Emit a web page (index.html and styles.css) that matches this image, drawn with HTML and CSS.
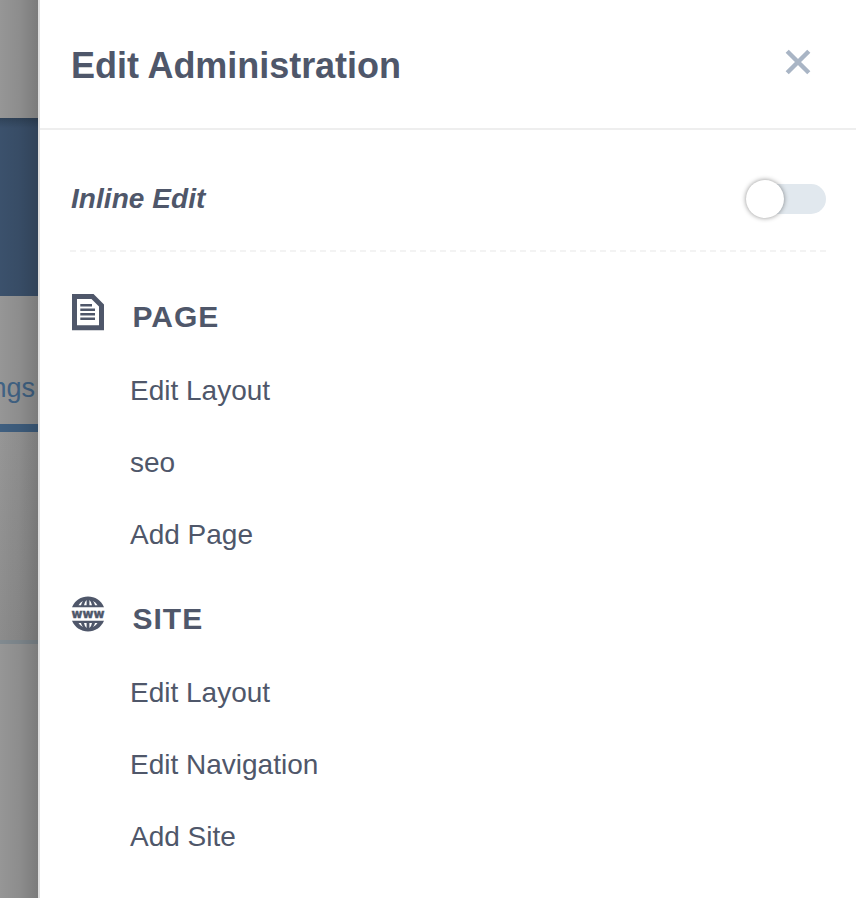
FILE: index.html
```html
<!DOCTYPE html>
<html lang="en">
<head>
<meta charset="utf-8">
<title>Edit Administration</title>
<link rel="stylesheet" href="styles.css">
</head>
<body>
<div class="app">
  <div class="backdrop">
    <div class="topbar"></div>
    <div class="banner"></div>
    <div class="tabs"><span class="tab">ngs</span></div>
    <div class="content"></div>
    <div class="rest"></div>
  </div>
  <aside class="drawer">
    <header class="drawer-header">
      <h1>Edit Administration</h1>
      <button class="close" aria-label="Close">
        <svg width="26" height="26" viewBox="0 0 26 26"><path d="M2.200 2.200 23.800 23.800M23.800 2.200 2.200 23.800" fill="none" stroke="#a9b5c5" stroke-width="4.400"/></svg>
      </button>
    </header>
    <div class="drawer-body">
      <div class="inline-edit">
        <span class="label">Inline Edit</span>
        <span class="toggle"><span class="knob"></span></span>
      </div>
      <svg class="divider" width="758" height="2"><path d="M0 1H756" stroke="#f3f3f3" stroke-width="2" stroke-dasharray="6 4"/></svg>
      <section class="group">
        <h2>
          <svg width="34" height="38" viewBox="0 0 34 38"><path d="M3.500 3.500H21.500L30.500 12.500V34.800H3.500Z" fill="none" stroke="#4f576a" stroke-width="5"/><path d="M9.300 12.300H21M9.300 16.700H24M9.300 21.300H24M9.300 25.800H24" stroke="#4f576a" stroke-width="2.600"/></svg>
          <span>PAGE</span>
        </h2>
        <ul><li>Edit Layout</li><li>seo</li><li>Add Page</li></ul>
      </section>
      <section class="group">
        <h2>
          <svg width="34" height="38" viewBox="0 0 34 38">
            <g fill="#4f576a"><path d="M1 12.300C4 5.400 10 1.600 17 1.600S30 5.400 33 12.300Z"/><path d="M1 25.800C4 32.800 10 36.400 17 36.400S30 32.800 33 25.800Z"/></g>
            <g fill="#fff"><path d="M7.500 10.200Q9 7.500 12 6Q10.500 8 10 10.200ZM13 10.200Q13.600 6.800 15.600 5V10.200ZM18.400 10.200V5Q20.400 6.800 21 10.200ZM26.500 10.200Q25 7.500 22 6Q23.500 8 24 10.200Z"/><path d="M7.500 27.900Q9 30.600 12 32.100Q10.500 30.100 10 27.900ZM13 27.900Q13.600 31.200 15.600 33V27.900ZM18.400 27.900V33Q20.400 31.200 21 27.900ZM26.500 27.900Q25 30.600 22 32.100Q23.500 30.100 24 27.900Z"/></g>
            <text class="www" x="0.500" y="22.500" textLength="33" lengthAdjust="spacingAndGlyphs">www</text>
          </svg>
          <span>SITE</span>
        </h2>
        <ul><li>Edit Layout</li><li>Edit Navigation</li><li>Add Site</li></ul>
      </section>
    </div>
  </aside>
</div>
</body>
</html>
```
FILE: styles.css
```css
* { box-sizing: border-box; }
body { margin: 0; font-family: "Liberation Sans", Arial, sans-serif; color: #4f576a; background: #fff; }
.app { display: flex; height: 898px; overflow: hidden; }
.backdrop { position: relative; width: 38px; flex: none; display: flex; flex-direction: column; overflow: hidden; background: #969696; }
.backdrop::after { content: ""; position: absolute; inset: 0; background: linear-gradient(90deg, rgba(0,0,0,0), rgba(0,0,0,.06) 50%, rgba(0,0,0,.18)); }
.topbar { height: 118px; }
.banner { height: 178px; background: linear-gradient(#304359, #3b516c 10px); }
.tabs { height: 136px; border-bottom: 8px solid #3f5f80; display: flex; justify-content: flex-end; padding: 77px 3px 0 0; }
.tab { font-size: 27px; line-height: 30px; color: #416385; }
.content { height: 212px; border-bottom: 4px solid #818a90; background: linear-gradient(#969696, #8c8c8c); }
.rest { flex: 1; }
.drawer { flex: 1; border-left: 2px solid #dedede; background: #fff; }
.drawer-header { height: 130px; display: flex; justify-content: space-between; padding: 45px 45px 0 31px; border-bottom: 2px solid #eee; }
h1 { margin: 0; font-size: 36px; line-height: 42px; letter-spacing: -.04px; }
.close { width: 26px; height: 26px; margin: 4px 2px 0 0; padding: 0; border: 0; background: none; }
.close svg { display: block; }
.drawer-body { padding: 0 30px; }
.inline-edit { height: 120px; display: flex; justify-content: space-between; padding-top: 49px; }
.label { margin-left: 1px; font-size: 28px; line-height: 39px; font-weight: bold; font-style: italic; letter-spacing: .05px; }
.toggle { position: relative; width: 76px; height: 30px; margin: 5px 2px 0 0; border-radius: 15px; background: #e1e8ee; }
.knob { position: absolute; left: -4px; top: -4px; width: 38px; height: 38px; border-radius: 50%; background: #fff; box-shadow: 0 0 5px rgba(0,0,0,.45); }
.divider { display: block; }
.group { height: 302px; padding-top: 41px; }
h2 { height: 62px; margin: 0; display: flex; gap: 27.5px; font-size: 30px; line-height: 48px; letter-spacing: 1px; }
h2 svg { flex: none; margin-left: 1px; overflow: visible; }
ul { list-style: none; margin: 0; padding: 0 0 0 60px; }
li { height: 72px; font-size: 28px; line-height: 72px; }
.www { font: bold 12.5px "DejaVu Sans", sans-serif; letter-spacing: 0; fill: #4f576a; stroke: #4f576a; stroke-width: .5px; }
```
